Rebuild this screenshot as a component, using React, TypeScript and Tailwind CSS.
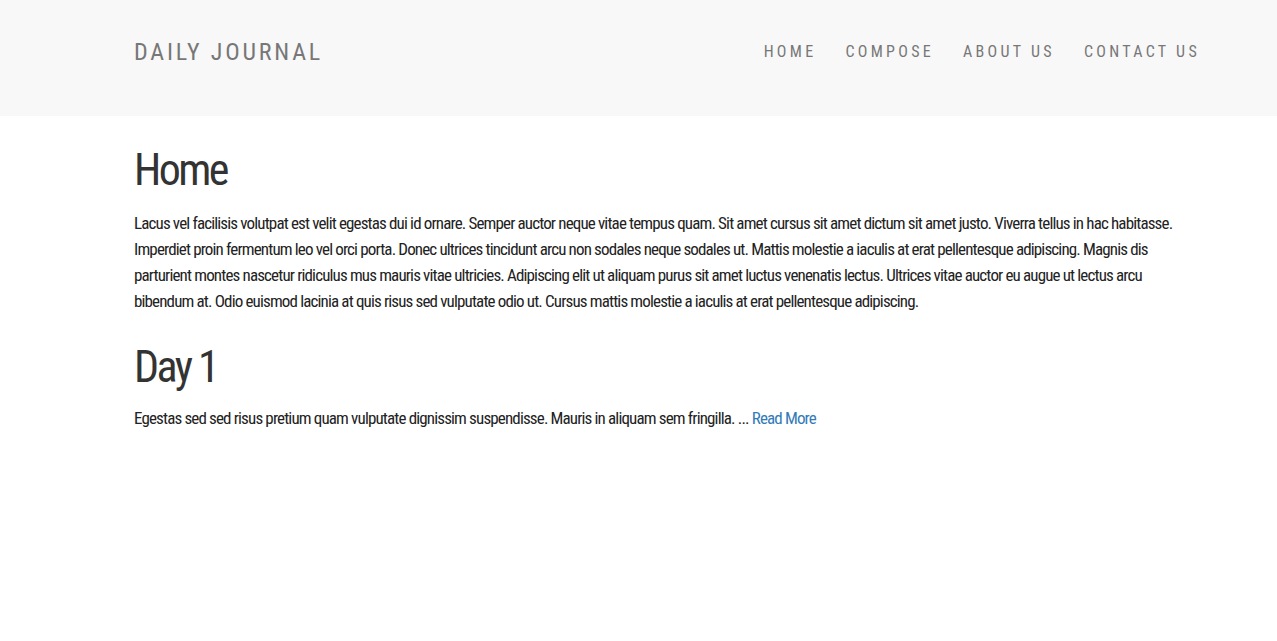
const links = ['HOME', 'COMPOSE', 'ABOUT US', 'CONTACT US']

function Navbar() {
    return (
        <nav className="w-full h-[116px] bg-[#f8f8f8]">
            <div className="ml-[134px] mr-[77px] h-full flex items-center justify-between pb-[13px]">
                <div className="text-[24px] tracking-[2.8px] text-[#777]">DAILY JOURNAL</div>
                <ul className="flex items-center gap-[29px]">
                    {links.map((link) =>
                        <li key={link} className="text-[16px] tracking-[3.3px] text-[#777]">{link}</li>)}
                </ul>
            </div>
        </nav>
    )
}

export default function App() {
    return (
        <div className="w-full min-h-[641px] bg-white font-[Roboto,sans-serif] font-stretch-condensed">
            <Navbar/>
            <main className="ml-[134px] mr-[92px] pt-[26px]">
                <h1 className="text-[44px] leading-[56px] tracking-[-2.6px] text-[#333]">Home</h1>
                <p className="mt-[12px] text-[17px] leading-[26px] tracking-[-0.85px] text-[#222]">
                    Lacus vel facilisis volutpat est velit egestas dui id ornare. Semper auctor neque vitae tempus quam. Sit amet cursus sit amet dictum sit amet justo. Viverra tellus in hac habitasse. Imperdiet proin fermentum leo vel orci porta. Donec ultrices tincidunt arcu non sodales neque sodales ut. Mattis molestie a iaculis at erat pellentesque adipiscing. Magnis dis parturient montes nascetur ridiculus mus mauris vitae ultricies. Adipiscing elit ut aliquam purus sit amet luctus venenatis lectus. Ultrices vitae auctor eu augue ut lectus arcu bibendum at. Odio euismod lacinia at quis risus sed vulputate odio ut. Cursus mattis molestie a iaculis at erat pellentesque adipiscing.
                </p>
                <h1 className="mt-[25px] text-[44px] leading-[56px] tracking-[-2.6px] text-[#333]">Day 1</h1>
                <p className="mt-[10px] text-[17px] leading-[26px] tracking-[-0.85px] text-[#222]">
                    Egestas sed sed risus pretium quam vulputate dignissim suspendisse. Mauris in aliquam sem fringilla. ... <a href="#" className="text-[#337ab7]">Read More</a>
                </p>
            </main>
        </div>
    )
}
